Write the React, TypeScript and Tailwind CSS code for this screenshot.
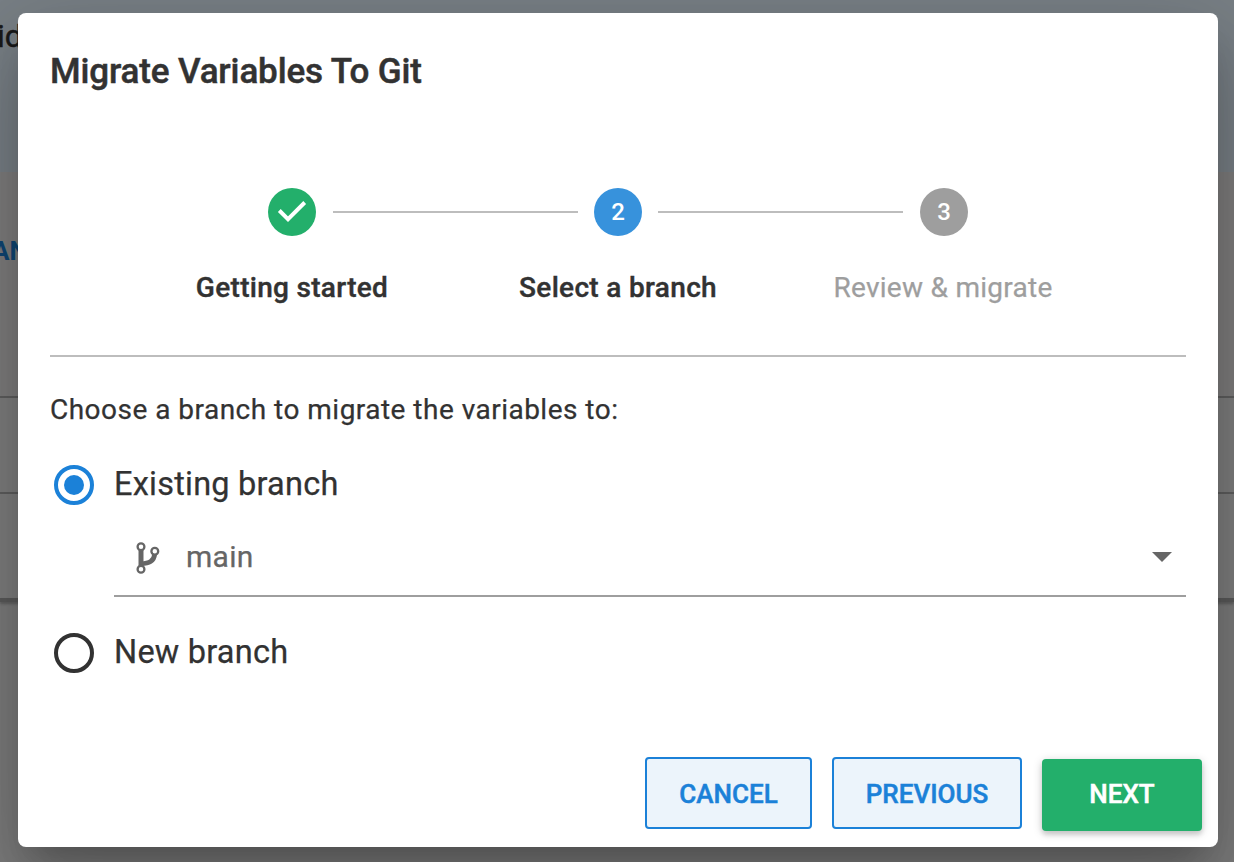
import { ReactNode } from "react";

function Radio({ checked, label }: { checked: boolean; label: string }) {
  return (
    <label className="flex h-10 items-center pl-1">
      <span
        className={
          checked
            ? "flex size-10 items-center justify-center rounded-full border-4 border-[#1b81d8]"
            : "flex size-10 items-center justify-center rounded-full border-4 border-[#323232]"
        }
      >
        {checked && <span className="size-5 rounded-full bg-[#1b81d8]" />}
      </span>
      <span className="ml-5 pb-0.5 text-[32.5px] leading-10 tracking-[0.22px] [-webkit-text-stroke:0.25px]">{label}</span>
    </label>
  );
}

function Step({ badge, color, label, labelStyle }: { badge: ReactNode; color: string; label: string; labelStyle: string }) {
  return (
    <div className="flex w-12 flex-col items-center">
      <div className={`flex size-12 items-center justify-center rounded-full text-2xl font-medium text-white ${color}`}>
        {badge}
      </div>
      <div className={`mt-8 text-[28px] leading-10 whitespace-nowrap ${labelStyle}`}>{label}</div>
    </div>
  );
}

function Connector({ margin }: { margin: string }) {
  return <div className={`mt-[23px] h-0.5 w-[245px] bg-[#bdbdbd] ${margin}`} />;
}

function Check() {
  return (
    <svg viewBox="0 0 48 48" className="size-12" fill="none" stroke="#fff" strokeWidth="3.9">
      <path d="M11.3 22.5 20 31.2 36.7 14.5" />
    </svg>
  );
}

function BranchIcon() {
  return (
    <svg viewBox="0 0 24 32" className="h-8 w-6" fill="none" stroke="#666">
      <path d="M5 8v16" strokeWidth="5" />
      <path d="M5 21.8C13 21.3 18 19.5 18.7 12" strokeWidth="4.8" />
      <circle cx="5" cy="4.8" r="3.4" fill="#fff" strokeWidth="2.3" />
      <circle cx="18.8" cy="9.3" r="3.4" fill="#fff" strokeWidth="2.3" />
      <circle cx="5" cy="27.2" r="3.4" fill="#fff" strokeWidth="2.3" />
    </svg>
  );
}

function Backdrop() {
  return (
    <div className="flex h-full flex-col overflow-hidden bg-[#7d7d7d]">
      <div className="h-[172px] shrink-0 bg-[#798086] pt-4 text-[32px] leading-10 text-[#191919] [-webkit-text-stroke:0.5px]">
        <span className="-ml-[3px]">id</span>
      </div>
      <div className="h-[224px] shrink-0 bg-[#7f7e7e] pt-[59px] text-[26px] leading-10 font-bold text-[#0e4674]">
        <span className="-ml-2">AN</span>
      </div>
      <div className="h-24 shrink-0 border-t-2 border-[#5f5f5f] bg-[#7f7f7f]" />
      <div className="h-[106px] shrink-0 border-t-2 border-[#5f5f5f] bg-[#7f7f7f]" />
      <div className="h-1 shrink-0 bg-[#5b5b5b] shadow-[0_2px_3px_rgba(0,0,0,0.25)]" />
    </div>
  );
}

export default function App() {
  return (
    <div className="relative h-screen w-screen overflow-hidden font-['Roboto',sans-serif] text-[#323232]">
      <Backdrop />
      <div
        role="dialog"
        className="absolute top-[13px] left-[18px] flex h-[834px] w-[1200px] flex-col rounded-lg bg-white shadow-[0_22px_30px_-14px_rgba(0,0,0,0.2),0_48px_76px_6px_rgba(0,0,0,0.14),0_18px_92px_16px_rgba(0,0,0,0.12)]"
      >
        <h2 className="px-8 pt-[37px] text-[35px] leading-[44px] font-medium tracking-[-0.14px] [-webkit-text-stroke:0.5px]">
          Migrate Variables To Git
        </h2>

        <div className="mx-8 mt-[94px] flex h-[169px] justify-center gap-4 border-b-2 border-[#bdbdbd]">
          <Step badge={<Check />} color="bg-[#23af6b]" label="Getting started" labelStyle="font-medium tracking-[0.3px] [-webkit-text-stroke:0.4px]" />
          <Connector margin="ml-px" />
          <Step badge="2" color="bg-[#3792dc]" label="Select a branch" labelStyle="font-medium tracking-[0.33px] [-webkit-text-stroke:0.4px]" />
          <Connector margin="mr-px" />
          <Step badge="3" color="bg-[#9e9e9e]" label="Review & migrate" labelStyle="pr-0.5 text-[#9e9e9e] tracking-[0.27px] [-webkit-text-stroke:0.25px]" />
        </div>

        <div className="flex flex-col px-8">
          <p className="mt-[33px] text-[28px] leading-10 tracking-[0.48px] [-webkit-text-stroke:0.25px]">
            Choose a branch to migrate the variables to:
          </p>
          <div className="mt-[35px]">
            <Radio checked label="Existing branch" />
          </div>
          <div className="mt-3 ml-16 flex h-20 items-center border-b-2 border-[#9e9e9e] pt-1 pl-[22px] text-[#666]">
            <BranchIcon />
            <span className="ml-[26px] pb-0.5 text-[30px] leading-10 tracking-[0.3px] [-webkit-text-stroke:0.25px]">main</span>
            <svg viewBox="0 0 20 10" className="mr-3.5 mb-0.5 ml-auto h-2.5 w-5 fill-[#666]">
              <path d="M0 0h20L10 10z" />
            </svg>
          </div>
          <div className="mt-9">
            <Radio checked={false} label="New branch" />
          </div>
        </div>

        <div className="mt-auto flex items-start justify-end gap-5 pr-4 pb-4 text-[26px] font-medium [-webkit-text-stroke:0.5px]">
          <button className="h-[72px] w-[167px] rounded border-2 border-[#1b81d8] bg-[#ecf4fb] pt-0.5 text-[#1b81d8]">CANCEL</button>
          <button className="h-[72px] w-[190px] rounded border-2 border-[#1b81d8] bg-[#ecf4fb] pt-0.5 text-[#1b81d8]">PREVIOUS</button>
          <button className="mt-0.5 h-[72px] w-40 rounded bg-[#23af6b] pb-0.5 text-white shadow-[0_2px_10px_rgba(0,0,0,0.2),0_4px_4px_rgba(0,0,0,0.1)]">
            NEXT
          </button>
        </div>
      </div>
    </div>
  );
}
